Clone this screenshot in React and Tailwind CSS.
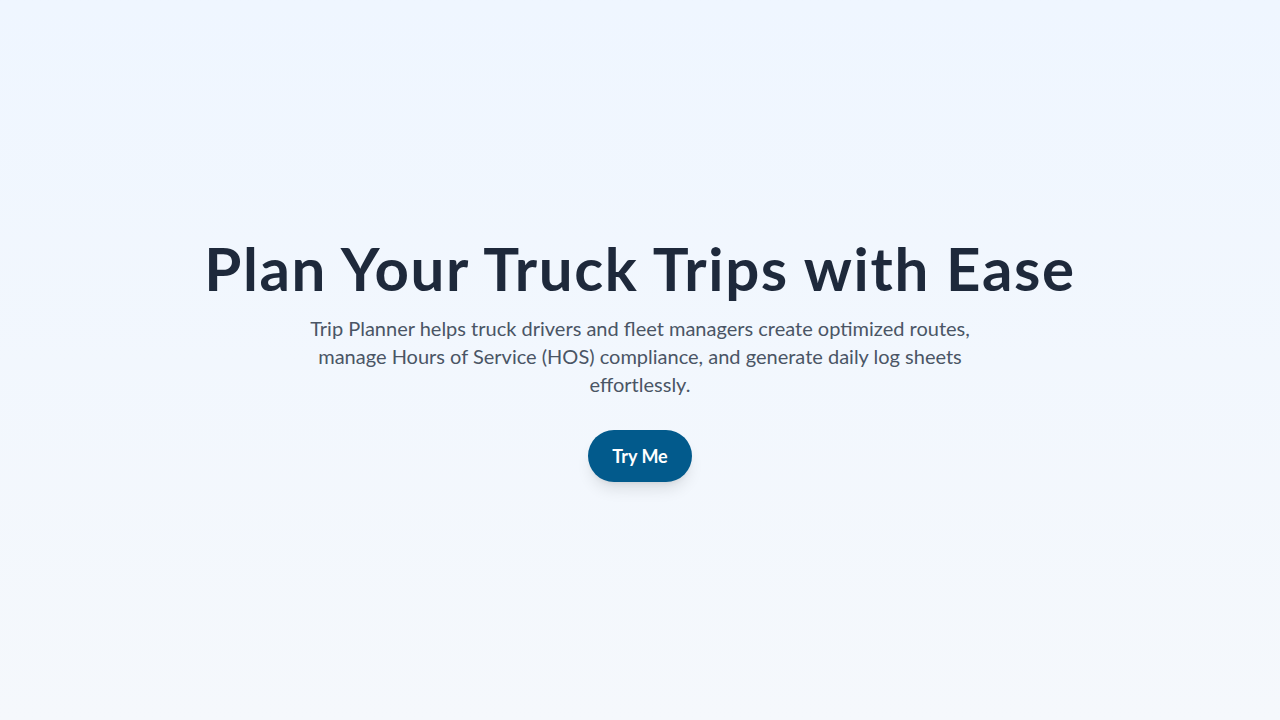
import React from "react";

const App = () => {
  return (
    <div
      className="min-h-screen flex flex-col items-center justify-center bg-gradient-to-b from-[#eff6ff] to-[#f5f8fc] px-4 text-center"
      style={{ fontFamily: 'Lato, "Noto Sans", sans-serif' }}
    >
      <h1 className="text-6xl font-bold tracking-[0.027em] text-[#1e293b] mb-4">
        Plan Your Truck Trips with Ease
      </h1>
      <p className="text-xl text-gray-600 max-w-2xl leading-7">
        Trip Planner helps truck drivers and fleet managers create optimized
        routes, manage Hours of Service (HOS) compliance, and generate daily log
        sheets effortlessly.
      </p>
      <button className="mt-8 bg-[#025a8c] text-white text-lg font-bold px-6 py-3 rounded-full shadow-lg hover:bg-[#014a74] transition cursor-pointer">
        Try Me
      </button>
    </div>
  );
};

export default App;
